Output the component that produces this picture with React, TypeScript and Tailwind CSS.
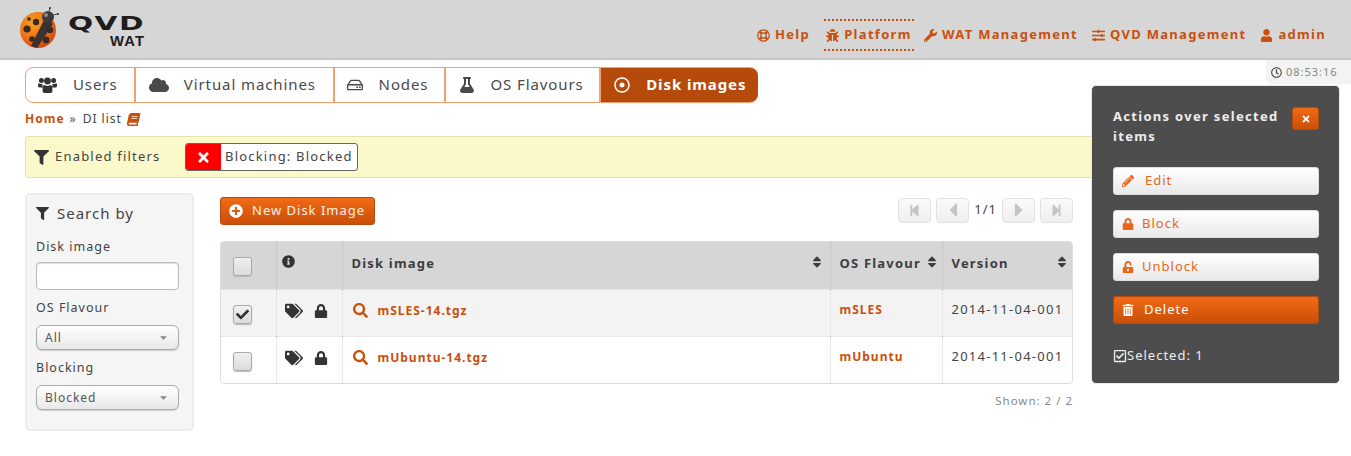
import React from "react";
import {
  FaCloud, FaRegHdd, FaFlask, FaRegDotCircle, FaBook, FaFilter, FaTimes, FaRegLifeRing, FaBug,
  FaWrench, FaSlidersH, FaUser, FaRegClock, FaPlusCircle, FaInfoCircle, FaTags, FaLock, FaUnlockAlt,
  FaSearch, FaTrashAlt, FaPencilAlt, FaStepBackward, FaStepForward, FaCaretLeft, FaCaretRight,
  FaSort, FaCheck, FaRegCheckSquare, FaCaretDown,
} from "react-icons/fa";

function Logo() {
  return (
    <svg width="150" height="58" viewBox="0 0 150 58" className="shrink-0">
      <defs>
        <radialGradient id="bug" cx="0.35" cy="0.3" r="0.8">
          <stop offset="0" stopColor="#f7a21f" />
          <stop offset="0.6" stopColor="#ee6a18" />
          <stop offset="1" stopColor="#c9400f" />
        </radialGradient>
      </defs>
      <circle cx="38" cy="30" r="18" fill="url(#bug)" />
      <path d="M46 16 L31 46 L37 48 L53 24 Z" fill="#3a3230" />
      <circle cx="48" cy="17" r="6" fill="#3f3b3a" />
      <circle cx="46" cy="15" r="2" fill="#8d8a88" />
      <path d="M49 11 L50 8 M53 15 L58 14" stroke="#444" strokeWidth="1" />
      <circle cx="50" cy="8" r="1" fill="#333" />
      <circle cx="58" cy="14" r="1" fill="#333" />
      <circle cx="36" cy="22" r="3.2" fill="#3a2a24" />
      <circle cx="27" cy="29" r="3.6" fill="#3a2a24" />
      <circle cx="32" cy="39" r="2.8" fill="#3a2a24" />
      <circle cx="50" cy="30" r="3.2" fill="#3a2a24" />
      <circle cx="46" cy="40" r="3.4" fill="#3a2a24" />
      <circle cx="29" cy="19" r="1.8" fill="#3a2a24" />
      <text x="68" y="30" textLength="77" lengthAdjust="spacingAndGlyphs" fontFamily="'DejaVu Sans'" fontWeight="700" fontSize="20" fill="#1d1d1d">QVD</text>
      <text x="110" y="46" textLength="35" lengthAdjust="spacingAndGlyphs" fontFamily="'Liberation Sans'" fontWeight="700" fontSize="14" fill="#1d1d1d">WAT</text>
    </svg>
  );
}

function UsersIcon() {
  return (
    <svg width="19" height="17" viewBox="0 0 19 17" fill="#333" className="ml-[12px] mr-[16px] shrink-0">
      <circle cx="3.4" cy="3.6" r="2.5" />
      <circle cx="15.6" cy="3.6" r="2.5" />
      <circle cx="9.5" cy="4" r="3.4" />
      <path d="M0 7.2 Q0 6.4 1 6.6 Q3 7.4 4.6 6.8 Q4.2 8.6 5 10.4 L1.4 10.4 Q0 10.4 0 9 Z" />
      <path d="M19 7.2 Q19 6.4 18 6.6 Q16 7.4 14.4 6.8 Q14.8 8.6 14 10.4 L17.6 10.4 Q19 10.4 19 9 Z" />
      <path d="M4.6 11.4 Q4.8 8.2 6.6 8 Q9.5 9.8 12.4 8 Q14.2 8.2 14.4 11.4 L14.4 14 Q14.4 16 12.6 16 L6.4 16 Q4.6 16 4.6 14 Z" />
    </svg>
  );
}

function NavItem({ icon, label, active }: { icon: React.ReactNode; label: string; active?: boolean }) {
  return (
    <div className={"flex items-center gap-[5px] h-[32px] " + (active ? "border-y-2 border-dotted border-[#c9500d] w-[90px] justify-center -mr-[4px]" : "")}>
      <span className="text-[13px]">{icon}</span>
      <span>{label}</span>
    </div>
  );
}

function Tab({ icon, label, width, active, first }: { icon: React.ReactNode; label: string; width: string; active?: boolean; first?: boolean }) {
  return (
    <div className={`flex items-center h-full ${width} ${first ? "" : "border-l-2 border-[#f2a06d]"} ${active ? "bg-[#b54a0a] text-white font-bold rounded-r-[8px] -mr-px" : "text-[#4a4a4a]"}`}>
      {icon}
      <span className="pb-[2px]">{label}</span>
    </div>
  );
}

function SelectBox({ value }: { value: string }) {
  return (
    <div className="h-[25px] border border-[#aaa] rounded-[6px] bg-gradient-to-b from-white to-[#e8e8e8] shadow-[0_1px_1px_#ccc] flex items-center justify-between pl-[8px] pr-[9px] text-[12px] text-[#555]">
      <span>{value}</span>
      <FaCaretDown className="text-[11px] text-[#888]" />
    </div>
  );
}

function PageBtn({ icon }: { icon: React.ReactNode }) {
  return (
    <div className="w-[33px] h-[25px] border border-[#e2e2e2] rounded-[4px] bg-gradient-to-b from-[#fafafa] to-[#efefef] flex items-center justify-center text-[#c4c4c4] text-[14px]">
      {icon}
    </div>
  );
}

function Check({ checked }: { checked?: boolean }) {
  return (
    <div className="w-[19px] h-[19px] border border-[#aaa] rounded-[3px] bg-gradient-to-b from-[#efefef] to-[#dcdcdc] shadow-[0_1px_1px_#bbb] flex items-center justify-center text-[#333]">
      {checked && <FaCheck className="text-[13px]" />}
    </div>
  );
}

function ActionBtn({ icon, label, primary, gap }: { icon: React.ReactNode; label: string; primary?: boolean; gap: string }) {
  return (
    <div className={`h-[28px] rounded-[3px] flex items-center pl-[7px] ${gap} text-[13px] ${primary ? "bg-gradient-to-b from-[#f26a16] to-[#c94f08] border border-[#b54a0a] text-white" : "bg-gradient-to-b from-white to-[#e9e9e9] border border-[#ddd] text-[#e8651a]"}`}>
      <span className="w-[14px] flex justify-center text-[12px]">{icon}</span>
      <span>{label}</span>
    </div>
  );
}

const th = "border-r border-dotted border-[#bdbdbd] align-top last:border-r-0";
const td = "border-r border-dotted border-[#d8d8d8] align-top last:border-r-0";

function Row({ name, flavour, odd, checked }: { name: string; flavour: string; odd?: boolean; checked?: boolean }) {
  return (
    <tr className={`h-[47px] ${odd ? "bg-[#f3f3f3]" : "bg-white"} border-t border-dotted border-[#d8d8d8]`}>
      <td className={`${td} pl-[12px] pt-[15px]`}><Check checked={checked} /></td>
      <td className={`${td} pl-[8px] pt-[12px]`}>
        <div className="flex items-center gap-[11px] text-[#333] text-[14px]"><FaTags className="text-[18px]" /><FaLock /></div>
      </td>
      <td className={`${td} pl-[10px] pt-[12px]`}>
        <div className="flex items-center gap-[10px] text-[#c9500d] font-bold text-[12px]"><FaSearch className="text-[15px]" /><span>{name}</span></div>
      </td>
      <td className={`${td} pl-[9px] pt-[11px] text-[#c9500d] font-bold text-[12px]`}>{flavour}</td>
      <td className={`${td} pl-[9px] pt-[10px] text-[13px] tracking-[1.25px] text-[#444]`}>2014-11-04-001</td>
    </tr>
  );
}

export default function App() {
  return (
    <div className="relative w-[1351px] h-[456px] overflow-hidden bg-white font-['Noto_Sans',sans-serif] tracking-[1px] text-[#444]">
      <header className="h-[60px] bg-[#d6d6d6] border-b-[2px] border-[#c6c6c6] flex items-center justify-between pr-[25px]">
        <Logo />
        <nav className="flex items-center gap-[14px] text-[13px] tracking-[1.3px] font-bold text-[#c9500d] mt-[12px]">
          <NavItem icon={<FaRegLifeRing />} label="Help" />
          <NavItem icon={<FaBug />} label="Platform" active />
          <NavItem icon={<FaWrench />} label="WAT Management" />
          <NavItem icon={<FaSlidersH />} label="QVD Management" />
          <NavItem icon={<FaUser />} label="admin" />
        </nav>
      </header>

      <div className="absolute right-0 top-[60px] w-[85px] h-[24px] bg-[#f3f3f3] rounded-bl-[6px] flex items-center pl-[5px] gap-[4px] text-[11px] text-[#888]">
        <FaRegClock className="text-[#444]" /><span>08:53:16</span>
      </div>

      <main className="pl-[25px] pt-[7px]">
        <div className="flex h-[36px] w-[733px] border border-[#f2a06d] rounded-[8px] text-[15px] tracking-[0.9px]">
          <Tab first width="w-[108px]" label="Users" icon={<UsersIcon />} />
          <Tab width="w-[199px]" label="Virtual machines" icon={<FaCloud className="text-[20px] ml-[13px] mr-[15px]" />} />
          <Tab width="w-[112px]" label="Nodes" icon={<FaRegHdd className="text-[16px] ml-[12px] mr-[16px]" />} />
          <Tab width="w-[155px]" label="OS Flavours" icon={<FaFlask className="text-[16px] ml-[13px] mr-[15px]" />} />
          <Tab active width="w-[159px]" label="Disk images" icon={<FaRegDotCircle className="text-[16px] ml-[13px] mr-[16px]" />} />
        </div>

        <div className="flex items-center h-[18px] mt-[7px] text-[12px] gap-[5px]">
          <span className="font-bold text-[#c9500d]">Home</span>
          <span className="text-[#555] mr-[1px]">»</span>
          <span>DI list</span>
          <FaBook className="text-[#c9500d] text-[13px] -skew-x-12" />
        </div>

        <div className="mt-[8px] h-[42px] w-[1090px] bg-[#fbf9c9] border border-[#e3e1b0] rounded-[3px] flex items-center pl-[8px] text-[13px] tracking-[1.2px]">
          <FaFilter className="text-[15px] text-[#333] mr-[6px]" />
          <span className="w-[130px]">Enabled filters</span>
          <div className="flex h-[28px] w-[173px] border border-[#666] rounded-[3px] overflow-hidden bg-white items-stretch">
            <div className="w-[35px] bg-[#ff0000] flex items-center justify-center text-white text-[15px]"><FaTimes /></div>
            <div className="px-[4px] flex items-center">Blocking: Blocked</div>
          </div>
        </div>

        <div className="flex mt-[15px] items-start">
          <aside className="w-[169px] h-[238px] bg-[#f5f5f5] border-2 border-[#ececec] rounded-[5px] pl-[9px] pr-[13px] pt-[7px] shrink-0">
            <div className="flex items-center gap-[8px] text-[15px] h-[22px]"><FaFilter className="text-[13px] text-[#333]" /><span>Search by</span></div>
            <div className="text-[12.5px] mt-[14px] h-[17px] leading-[17px]">Disk image</div>
            <div className="mt-[7px] h-[28px] bg-white border border-[#bbb] rounded-[4px] shadow-[inset_0_1px_1px_#ddd]" />
            <div className="text-[12.5px] mt-[9px] h-[17px] leading-[17px]">OS Flavour</div>
            <div className="mt-[9px]"><SelectBox value="All" /></div>
            <div className="text-[12.5px] mt-[9px] h-[17px] leading-[17px]">Blocking</div>
            <div className="mt-[9px]"><SelectBox value="Blocked" /></div>
          </aside>

          <section className="ml-[26px] w-[853px] shrink-0">
            <div className="flex items-center justify-between h-[28px] mt-[4px]">
              <div className="w-[155px] h-[28px] rounded-[3px] bg-gradient-to-b from-[#f26a16] to-[#c94f08] border border-[#b54a0a] text-white/90 text-[13px] flex items-center pl-[8px] gap-[9px]">
                <FaPlusCircle className="text-[14px] text-white" /><span>New Disk Image</span>
              </div>
              <div className="flex items-center gap-[5px] mb-[2px]">
                <PageBtn icon={<FaStepBackward className="text-[13px]" />} />
                <PageBtn icon={<FaCaretLeft className="text-[22px]" />} />
                <span className="text-[13px]">1/1</span>
                <PageBtn icon={<FaCaretRight className="text-[22px]" />} />
                <PageBtn icon={<FaStepForward className="text-[13px]" />} />
              </div>
            </div>

            <div className="mt-[16px] border border-[#ddd] rounded-[4px] overflow-hidden">
              <table className="w-full table-fixed border-collapse">
                <colgroup>
                  <col className="w-[55px]" />
                  <col className="w-[66px]" />
                  <col className="w-[488px]" />
                  <col className="w-[112px]" />
                  <col />
                </colgroup>
                <thead>
                  <tr className="h-[47px] bg-[#d6d6d6] text-[13px] tracking-[1.2px] font-bold text-[#3d3d3d] text-left">
                    <th className={`${th} pl-[12px] pt-[15px]`}><Check /></th>
                    <th className={`${th} pl-[5px] pt-[12px]`}><FaInfoCircle className="text-[13px] text-[#333] mt-[1px]" /></th>
                    <th className={`${th} pl-[9px] pt-[12px] font-bold`}>
                      <div className="flex justify-between pr-[6px] items-start"><span>Disk image</span><FaSort className="text-[14px] mt-[1px]" /></div>
                    </th>
                    <th className={`${th} pl-[9px] pt-[12px] font-bold`}>
                      <div className="flex justify-between pr-[3px] items-start"><span>OS Flavour</span><FaSort className="text-[14px] mt-[1px]" /></div>
                    </th>
                    <th className={`${th} pl-[9px] pt-[12px] font-bold`}>
                      <div className="flex justify-between pr-[3px] items-start"><span>Version</span><FaSort className="text-[14px] mt-[1px]" /></div>
                    </th>
                  </tr>
                </thead>
                <tbody>
                  <Row odd checked name="mSLES-14.tgz" flavour="mSLES" />
                  <Row name="mUbuntu-14.tgz" flavour="mUbuntu" />
                </tbody>
              </table>
            </div>
            <div className="text-right text-[11.5px] text-[#888] mt-[8px]">Shown: 2 / 2</div>
          </section>
        </div>
      </main>

      <div className="absolute left-[1091px] top-[85px] w-[249px] h-[299px] bg-[#4d4d4d] border border-[#e8e8e8] rounded-[5px] pl-[21px] pr-[20px] pt-[20px] text-[#eee]">
        <div className="flex items-start justify-between h-[61px]">
          <div className="w-[175px] text-[13px] tracking-[1.3px] font-bold leading-[20px] text-white/90">Actions over selected items</div>
          <div className="w-[27px] h-[23px] mt-[1px] rounded-[3px] bg-gradient-to-b from-[#f26a16] to-[#c94f08] border border-[#b54a0a] flex items-center justify-center text-white text-[10px]"><FaTimes /></div>
        </div>
        <div className="flex flex-col gap-[15px]">
          <ActionBtn icon={<FaPencilAlt />} label="Edit" gap="gap-[10px]" />
          <ActionBtn icon={<FaLock />} label="Block" gap="gap-[7px]" />
          <ActionBtn icon={<FaUnlockAlt />} label="Unblock" gap="gap-[7px]" />
          <ActionBtn icon={<FaTrashAlt />} label="Delete" gap="gap-[9px]" primary />
        </div>
        <div className="flex items-center mt-[23px] text-[13px] h-[18px]"><FaRegCheckSquare className="text-[14px]" /><span>Selected: 1</span></div>
      </div>
    </div>
  );
}
